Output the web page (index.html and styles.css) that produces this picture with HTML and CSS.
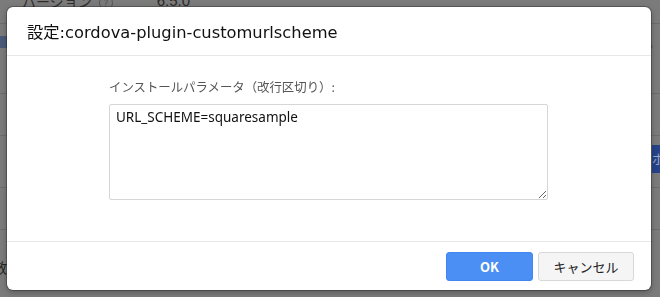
FILE: index.html
```html
<!DOCTYPE html>
<html lang="ja">
<head>
    <meta charset="UTF-8">
    <meta name="viewport" content="width=device-width, initial-scale=1.0">
    <title>設定</title>
    <link rel="stylesheet" href="styles.css">
</head>
<body>
    <div class="page">
        <div class="row row-top">
            <span class="cell-name">バージョン <span class="help">?</span></span>
            <span class="cell-value">6.5.0</span>
        </div>
        <div class="row row-a"><span class="blue-left"></span><span class="dot">。</span></div>
        <div class="row row-b"></div>
        <div class="row row-c"><span class="blue-right">ボ</span></div>
        <div class="row row-d"></div>
        <div class="row row-e"><span class="kanji">效</span></div>
    </div>

    <div class="backdrop">
        <div class="modal">
            <div class="modal-header">
                <h1>設定:cordova-plugin-customurlscheme</h1>
            </div>
            <div class="modal-body">
                <label for="params">インストールパラメータ（改行区切り）:</label>
                <textarea id="params">URL_SCHEME=squaresample</textarea>
            </div>
            <div class="modal-footer">
                <button class="btn btn-ok">OK</button>
                <button class="btn btn-cancel">キャンセル</button>
            </div>
        </div>
    </div>
</body>
</html>
```

FILE: styles.css
```css
body {
    margin: 0;
    padding: 0;
    background-color: #7b7b7b;
    font-family: 'Noto Sans CJK JP', 'Noto Sans', sans-serif;
    overflow: hidden;
}

.page {
    height: 297px;
    color: #333;
}

.row {
    border-bottom: 1px solid #6c6c6c;
    display: flex;
    justify-content: space-between;
    align-items: center;
}

.row-top {
    height: 23px;
    align-items: flex-start;
    font-size: 14px;
    line-height: 14px;
}

.cell-name {
    padding-left: 22px;
    margin-top: -6px;
    color: #2e2e2e;
}

.help {
    display: inline-block;
    width: 12px;
    height: 12px;
    margin-left: 4px;
    border: 1px solid #555;
    border-radius: 50%;
    font-size: 10px;
    text-align: center;
    line-height: 12px;
    color: #555;
}

.cell-value {
    margin-top: -6px;
    margin-right: 470px;
    font-family: 'Liberation Sans', sans-serif;
    font-size: 15px;
    color: #2a2a2a;
}

.row-a {
    height: 69px;
    align-items: flex-start;
}

.blue-left {
    width: 7px;
    height: 12px;
    margin-top: 12px;
    background-color: #4a5a78;
}

.dot {
    font-size: 12px;
    color: #444;
    margin-top: 10px;
}

.row-b {
    height: 41px;
}

.row-c {
    height: 51px;
    justify-content: flex-end;
    align-items: flex-start;
}

.blue-right {
    width: 8px;
    height: 28px;
    margin-top: 9px;
    background-color: #26438a;
    color: #9aa5c0;
    font-size: 13px;
    overflow: hidden;
    line-height: 28px;
}

.row-d {
    height: 41px;
}

.row-e {
    border-bottom: none;
    height: 60px;
    align-items: flex-start;
}

.kanji {
    font-size: 14px;
    margin-left: -7px;
    margin-top: 27px;
    color: #222;
}

.backdrop {
    position: fixed;
    top: 0;
    left: 0;
    right: 0;
    bottom: 0;
}

.modal {
    position: absolute;
    top: 7px;
    left: 7px;
    width: 644px;
    height: 283px;
    background-color: #fff;
    border-radius: 6px;
    box-shadow: 0 0 0 1px rgba(0, 0, 0, 0.25), 0 2px 6px rgba(0, 0, 0, 0.3);
    display: flex;
    flex-direction: column;
}

.modal-header {
    height: 48px;
    border-bottom: 1px solid #e8e8e8;
    display: flex;
    align-items: center;
    padding-left: 20px;
}

.modal-header h1 {
    margin: 0;
    font-family: 'DejaVu Sans', 'Noto Sans CJK JP', sans-serif;
    font-size: 16.3px;
    font-weight: normal;
    color: #111;
}

.modal-body {
    flex: 1;
    padding: 71px 0 0 102px;
    display: flex;
    flex-direction: column;
    border-bottom: 1px solid #e8e8e8;
}

.modal-body label {
    font-size: 12.4px;
    color: #555;
    line-height: 16px;
    margin-bottom: 9px;
    margin-top: -48px;
}

.modal-body textarea {
    width: 439px;
    height: 96px;
    box-sizing: border-box;
    border: 1px solid #d6d6d6;
    border-radius: 2px;
    padding: 3px 6px;
    font-family: 'Noto Sans', sans-serif;
    font-size: 13.5px;
    color: #111;
    resize: both;
}

.modal-footer {
    height: 48px;
    display: flex;
    justify-content: flex-end;
    align-items: center;
    gap: 5px;
    padding-right: 17px;
}

.btn {
    height: 29px;
    border-radius: 3px;
    font-size: 13px;
    font-family: 'Noto Sans CJK JP', sans-serif;
    cursor: pointer;
}

.btn-ok {
    width: 87px;
    background-color: #4b8ff5;
    border: 1px solid #4087f2;
    color: #fff;
    font-weight: bold;
}

.btn-cancel {
    width: 96px;
    background-color: #f5f5f5;
    border: 1px solid #d8d8d8;
    color: #222;
}
```
